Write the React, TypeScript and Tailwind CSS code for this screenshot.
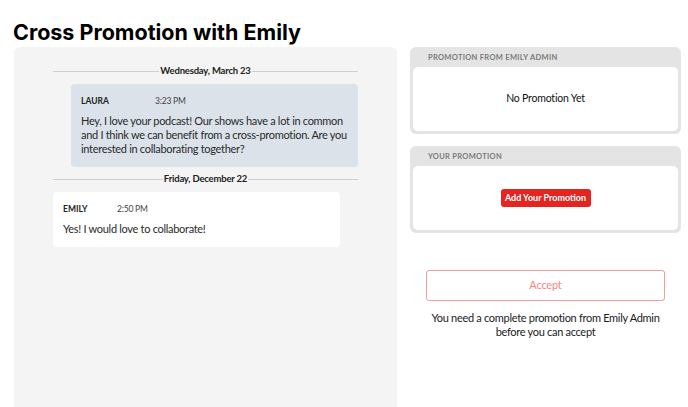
const body = { fontFamily: "Lato, 'Noto Sans', sans-serif" };
const heading = { fontFamily: "Inter, 'Noto Sans', sans-serif" };

function DateLine({ label }: { label: string }) {
  return (
    <div className="flex h-[14px] items-center">
      <div className="h-px flex-1 bg-[#cfcfcf]" />
      <span className="px-px text-[9.5px] font-bold leading-[14px] tracking-[-0.2px] text-[#222]">{label}</span>
      <div className="h-px flex-1 bg-[#cfcfcf]" />
    </div>
  );
}

interface BubbleProps {
  name: string;
  time: string;
  nameWidth: string;
  className: string;
  children: React.ReactNode;
}

function Bubble({ name, time, nameWidth, className, children }: BubbleProps) {
  return (
    <div className={`w-[287px] rounded-[4px] px-[10px] pt-[11px] pb-[11px] ${className}`}>
      <div className="flex h-[12px] items-center">
        <span className={`${nameWidth} text-[8.5px] font-bold text-[#222]`}>{name}</span>
        <span className="text-[8.5px] tracking-[-0.2px] text-[#444]">{time}</span>
      </div>
      <p className="mt-[7px] text-[11px] leading-[14px] tracking-[-0.3px] text-[#2a2a2a]">{children}</p>
    </div>
  );
}

function PromoCard({ title, children }: { title: string; children: React.ReactNode }) {
  return (
    <div className="rounded-[6px] bg-[#e4e4e4] px-[3px] pb-[3px]">
      <div className="flex h-[20px] items-center pt-[2px] pl-[15px] text-[7.5px] font-bold tracking-[0.3px] text-[#7a7a7a]">
        {title}
      </div>
      <div className="flex h-[64px] items-center justify-center rounded-[5px] bg-white">{children}</div>
    </div>
  );
}

export default function App() {
  return (
    <div className="h-[407px] w-[688px] overflow-hidden bg-white pl-[14px] pr-[7px]" style={body}>
      <h1 className="-ml-px pt-[17px] text-[21.5px] font-bold leading-[30px] text-black" style={heading}>
        Cross Promotion with Emily
      </h1>
      <div className="flex gap-[13px]">
        <div className="h-[400px] w-[383px] rounded-t-[6px] bg-[#f4f4f4] px-[39px] pt-[17px]">
          <DateLine label="Wednesday, March 23" />
          <div className="mt-[6px] flex justify-end">
            <Bubble name="LAURA" time="3:23 PM" nameWidth="w-[74px]" className="bg-[#dbe2e9]">
              Hey, I love your podcast! Our shows have a lot in common and I think we can benefit from a
              cross-promotion. Are you interested in collaborating together?
            </Bubble>
          </div>
          <div className="mt-[5px]">
            <DateLine label="Friday, December 22" />
          </div>
          <div className="mt-[6px]">
            <Bubble name="EMILY" time="2:50 PM" nameWidth="w-[54px]" className="bg-white">
              Yes! I would love to collaborate!
            </Bubble>
          </div>
        </div>
        <div className="flex w-[271px] flex-col">
          <PromoCard title="PROMOTION FROM EMILY ADMIN">
            <span className="text-[10.5px] tracking-[-0.2px] text-[#111]">No Promotion Yet</span>
          </PromoCard>
          <div className="mt-[12px]">
            <PromoCard title="YOUR PROMOTION">
              <button className="h-[18px] w-[90px] whitespace-nowrap rounded-[3px] bg-[#e5231f] text-[9px] font-bold text-white">
                Add Your Promotion
              </button>
            </PromoCard>
          </div>
          <div className="mt-[37px] px-[16px]">
            <button className="h-[31px] w-full rounded-[3px] border border-[#f29c9c] text-[11px] tracking-[-0.2px] text-[#f08585]">
              Accept
            </button>
            <p className="mt-[10px] whitespace-nowrap text-center text-[11px] leading-[14px] tracking-[-0.3px] text-[#1a1a1a]">
              You need a complete promotion from Emily Admin
              <br />
              before you can accept
            </p>
          </div>
        </div>
      </div>
    </div>
  );
}
